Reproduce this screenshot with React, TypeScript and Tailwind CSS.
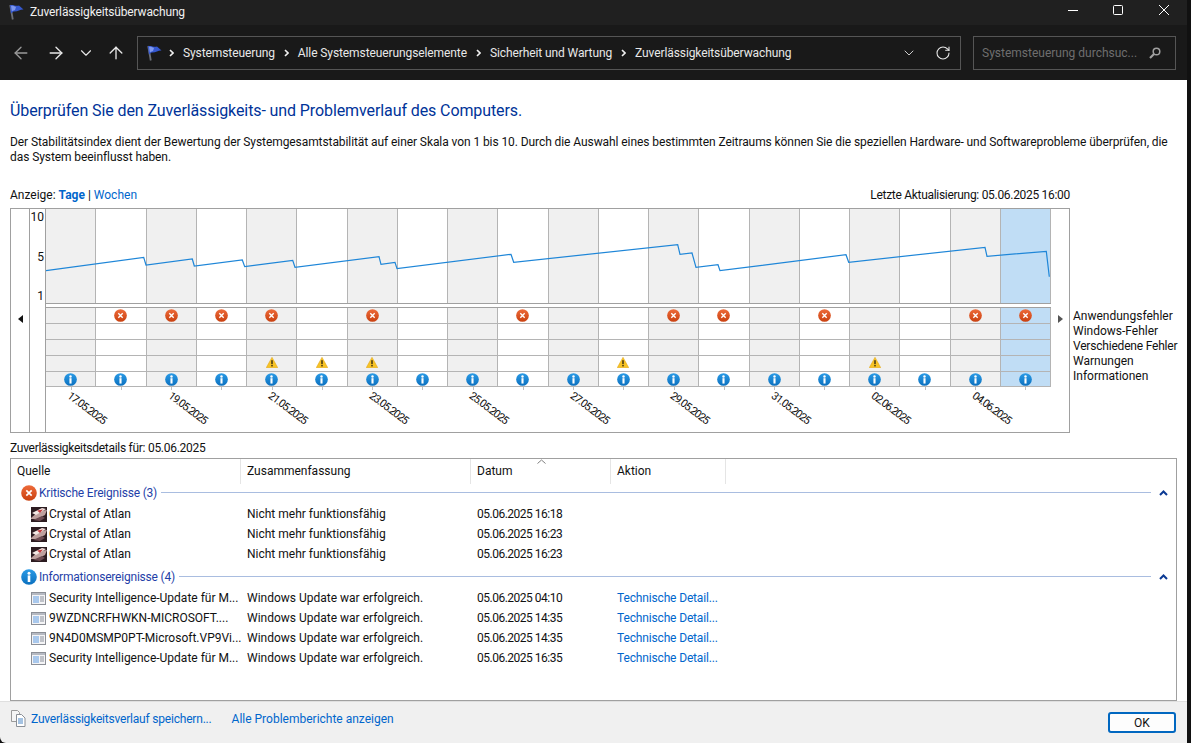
import { ArrowLeft, ArrowRight, ArrowUp, ChevronDown, RotateCw } from "lucide-react";

const errorDays = [1, 2, 3, 4, 6, 9, 12, 13, 15, 18, 19];
const warningDays = [4, 5, 6, 11, 16];
const dates = ["17.05.2025", "19.05.2025", "21.05.2025", "23.05.2025", "25.05.2025", "27.05.2025", "29.05.2025", "31.05.2025", "02.06.2025", "04.06.2025"];
const days = Array.from({ length: 20 }, (_, i) => i);
const linePoints =
  "45.5,270.7 143.7,257.3 146,265 192.3,259 194.3,266 242.3,260 244.7,266.7 292.7,260.3 295,267.3 379,256.7 381,264.3 395,262.3 397,268.7 511,254.3 513.7,262.3 677.7,244.7 680,254.3 692,253 696,267.3 718,264.7 720,270.7 846,254.7 848.7,262.3 985,247.3 987,256.3 1046.3,251.3 1049.3,276.7";

function Flag({ className }: { className?: string }) {
  return (
    <svg viewBox="0 0 16 16" className={className}>
      <path d="M2.200 1 4.800 15.500" stroke="#6b6f78" strokeWidth="1.800" fill="none" />
      <path d="M2 1.200C5 .3 8 2.500 11 1.500l4.500 4.100C12.500 5.200 9.500 8 5.500 7.500L3 9.500Z" fill="#3558d0" />
      <path d="M3 1.800c2-.3 3.500.5 5 1.200L7 6 3.800 7.200Z" fill="#7f98ee" />
    </svg>
  );
}

function ErrorIcon({ size = 13 }: { size?: number }) {
  return (
    <svg width={size} height={size} viewBox="0 0 16 16" className="shrink-0">
      <defs>
        <linearGradient id="err" x1="0" y1="0" x2="0" y2="1">
          <stop offset="0" stopColor="#ee6b3a" />
          <stop offset="1" stopColor="#c9400f" />
        </linearGradient>
      </defs>
      <circle cx="8" cy="8" r="7.800" fill="url(#err)" />
      <path d="M5.300 5.300 10.700 10.700M10.700 5.300 5.300 10.700" stroke="#fff" strokeWidth="1.700" />
    </svg>
  );
}

function InfoIcon({ size = 13 }: { size?: number }) {
  return (
    <svg width={size} height={size} viewBox="0 0 16 16" className="shrink-0">
      <defs>
        <linearGradient id="inf" x1="0" y1="0" x2="0" y2="1">
          <stop offset="0" stopColor="#2b9be6" />
          <stop offset="1" stopColor="#0b70bf" />
        </linearGradient>
      </defs>
      <circle cx="8" cy="8" r="7.800" fill="url(#inf)" />
      <rect x="6.700" y="6.400" width="2.600" height="6.600" fill="#fff" />
      <circle cx="8" cy="4.200" r="1.500" fill="#fff" />
    </svg>
  );
}

function WarningIcon() {
  return (
    <svg width="12" height="11" viewBox="0 0 12 11" className="shrink-0 -translate-y-[1px]">
      <path d="M6 .3 11.800 10.700H.2Z" fill="#f7c325" stroke="#e0a210" strokeWidth=".5" />
      <rect x="5.300" y="3.200" width="1.400" height="4" fill="#332a10" />
      <rect x="5.300" y="8" width="1.400" height="1.400" fill="#332a10" />
    </svg>
  );
}

function CrystalIcon() {
  return (
    <svg width="16" height="15" viewBox="0 0 16 15" className="shrink-0">
      <rect width="16" height="15" fill="#2c1b20" />
      <path d="M0 11 8 4l8-1-2 5-8 4H0Z" fill="#bfa09e" />
      <path d="M1 6 11 1l4 1L5 8Z" fill="#f3e6e2" />
      <path d="M6 3.500l6-1-3 3.500Z" fill="#c23a3e" />
      <path d="M2 13l9-4 3 2-5 3Z" fill="#6d4c52" />
    </svg>
  );
}

function UpdateIcon() {
  return (
    <svg width="15" height="13" viewBox="0 0 15 13" className="mr-[1px] shrink-0">
      <rect x=".5" y=".5" width="14" height="12" fill="#f4f4f6" stroke="#8c8f96" />
      <rect x="1" y="1" width="13" height="2" fill="#b5b9c2" />
      <rect x="2" y="4" width="6" height="7" fill="#a9c8ec" />
      <path d="M9 5h4M9 7h4M9 9h4" stroke="#8a8f9a" />
    </svg>
  );
}

function DocsIcon() {
  return (
    <svg width="15" height="17" viewBox="0 0 15 17" className="shrink-0">
      <path d="M.5.500h6l2 2v9h-8Z" fill="#f5f5f5" stroke="#9a9a9a" />
      <path d="M5.500 4.500h5l3.500 3.500v8.500H5.500Z" fill="#fff" stroke="#8a8f96" />
      <path d="M7 9h5M7 11h5M7 13h5" stroke="#4a86c5" />
    </svg>
  );
}

function cellBg(i: number) {
  if (i === 19) return "bg-[#c0ddf5]";
  return i % 2 === 0 ? "bg-[#f0f0f0]" : "bg-white";
}

function EventRow({ active, icon, short }: { active: number[]; icon: React.ReactNode; short?: boolean }) {
  return (
    <div className={`grid grid-cols-[repeat(20,minmax(0,1fr))] ${short ? "h-[15px]" : "h-[16px]"}`}>
      {days.map((i) => (
        <div key={i} className={`${cellBg(i)} flex items-center justify-center border-r border-b border-[#b4b4b4]`}>
          {active.includes(i) && icon}
        </div>
      ))}
    </div>
  );
}

function Crumb({ children }: { children: string }) {
  return (
    <span className="flex items-center">
      <svg width="5" height="8" viewBox="0 0 5 8" className="mr-[9px]">
        <path d="M1 1l3 3-3 3" stroke="#f0f0f0" strokeWidth="1.600" fill="none" />
      </svg>
      <span className="mr-[9px] tracking-[-0.1px]">{children}</span>
    </span>
  );
}

function Group({ title, icon }: { title: string; icon: React.ReactNode }) {
  return (
    <div className="flex h-[17px] items-center pl-[10px]">
      {icon}
      <span className="ml-[2px] tracking-[-0.2px] text-[#1f3fa8]">{title}</span>
      <div className="ml-[4px] h-px flex-1 bg-[#a9bde0]" />
      <svg width="9" height="6" viewBox="0 0 9 6" className="mr-[8px] ml-[8px]">
        <path d="M1 5l3.500-3.500L8 5" stroke="#0b3a94" strokeWidth="2" fill="none" />
      </svg>
    </div>
  );
}

function Row({ icon, name, summary, date, action }: { icon: React.ReactNode; name: string; summary: string; date: string; action?: boolean }) {
  return (
    <div className="grid h-[20px] grid-cols-[230px_230px_140px_1fr] items-center text-[#111]">
      <div className="flex items-center gap-[2px] pl-[20px] whitespace-nowrap">
        {icon}
        <span>{name}</span>
      </div>
      <div className="pl-[6px]">{summary}</div>
      <div className="pl-[6px] tracking-[-0.5px]">{date}</div>
      <div className="pl-[6px] tracking-[-0.15px] text-[#0066cc]">{action && "Technische Detail..."}</div>
    </div>
  );
}

export default function App() {
  return (
    <div className="h-[743px] w-[1191px] overflow-hidden bg-[#111] font-['Roboto',sans-serif] text-[12px] leading-[16px]">
      <div className="flex h-[743px] w-[1187px] flex-col overflow-hidden rounded-bl-[6px]">
        <div className="flex h-[25px] items-center bg-[#202020] pl-[8px] text-[#f0f0f0]">
          <Flag className="h-[16px] w-[16px] -translate-y-[1px]" />
          <span className="ml-[6px] -translate-y-[1px] tracking-[-0.15px]">Zuverlässigkeitsüberwachung</span>
          <div className="ml-auto flex -translate-y-[3px] items-center pr-[18px] text-white">
            <svg width="10" height="10" viewBox="0 0 10 10" className="mr-[35px]">
              <path d="M0 5.500h10" stroke="currentColor" />
            </svg>
            <svg width="10" height="10" viewBox="0 0 10 10" className="mr-[36px]">
              <rect x=".5" y=".5" width="9" height="9" rx="1" fill="none" stroke="currentColor" />
            </svg>
            <svg width="10" height="10" viewBox="0 0 10 10">
              <path d="M0 0l10 10M10 0 0 10" stroke="currentColor" />
            </svg>
          </div>
        </div>

        <div className="flex h-[55px] items-center bg-[#191919] text-[#e8e8e8]">
          <ArrowLeft size={20} strokeWidth={1.6} className="ml-[11px] text-[#9a9a9a]" />
          <ArrowRight size={20} strokeWidth={1.6} className="ml-[15px]" />
          <ChevronDown size={18} strokeWidth={1.5} className="mr-[1px] ml-[11px]" />
          <ArrowUp size={20} strokeWidth={1.6} className="ml-[10px]" />
          <div className="ml-[11px] flex h-[34px] w-[824px] items-center border border-[#555] pl-[8px]">
            <Flag className="mr-[7px] h-[16px] w-[16px]" />
            <Crumb>Systemsteuerung</Crumb>
            <Crumb>Alle Systemsteuerungselemente</Crumb>
            <Crumb>Sicherheit und Wartung</Crumb>
            <Crumb>Zuverlässigkeitsüberwachung</Crumb>
            <ChevronDown size={16} strokeWidth={1.3} className="mr-[18px] ml-auto" />
            <RotateCw size={16} strokeWidth={1.6} className="mr-[9px]" />
          </div>
          <div className="ml-[12px] flex h-[34px] w-[203px] items-center border border-[#555] pr-[14px] pl-[8px] text-[#6e6e6e]">
            <span>Systemsteuerung durchsuc...</span>
            <svg width="12" height="12" viewBox="0 0 12 12" className="ml-auto text-[#a0a0a0]">
              <circle cx="7.500" cy="4.500" r="3.300" fill="none" stroke="currentColor" strokeWidth="1.500" />
              <path d="M5 7 1 11" stroke="currentColor" strokeWidth="2.200" />
            </svg>
          </div>
        </div>

        <div className="flex flex-1 flex-col bg-white pl-[10px] text-[#111]">
          <div className="mt-[21px] h-[20px] text-[16px] leading-[20px] tracking-[-0.1px] text-[#003399]">
            Überprüfen Sie den Zuverlässigkeits- und Problemverlauf des Computers.
          </div>
          <p className="mt-[14px] w-[1165px] leading-[15px] tracking-[-0.08px]">
            Der Stabilitätsindex dient der Bewertung der Systemgesamtstabilität auf einer Skala von 1 bis 10. Durch die Auswahl eines bestimmten Zeitraums können Sie die speziellen Hardware- und Softwareprobleme überprüfen, die das System beeinflusst haben.
          </p>
          <div className="mt-[22px] flex h-[16px] w-[1060px] justify-between">
            <span>
              Anzeige: <span className="font-bold text-[#0066cc]">Tage</span> | <span className="text-[#0066cc]">Wochen</span>
            </span>
            <span className="tracking-[-0.3px]">Letzte Aktualisierung: 05.06.2025 16:00</span>
          </div>

          <div className="mt-[5px] flex">
            <div className="flex h-[225px] w-[1060px] border border-[#a0a0a0]">
              <div className="flex w-[19px] items-start justify-center border-r border-[#a0a0a0] pt-[106px]">
                <svg width="5" height="8" viewBox="0 0 5 8">
                  <path d="M5 0v8L0 4Z" fill="#111" />
                </svg>
              </div>
              <div className="flex w-[16px] flex-col items-end border-r border-[#a0a0a0] pr-[1px] text-[#111]">
                <span>10</span>
                <span className="mt-[24px]">5</span>
                <span className="mt-[23px]">1</span>
              </div>
              <div className="relative w-[1005px]">
                <div className="grid h-[95px] grid-cols-[repeat(20,minmax(0,1fr))] border-b border-[#a0a0a0]">
                  {days.map((i) => (
                    <div key={i} className={`${cellBg(i)} border-r border-[#b4b4b4]`} />
                  ))}
                </div>
                <svg viewBox="46 209 1005 94" className="absolute top-0 left-0 h-[94px] w-[1005px]">
                  <polyline points={linePoints} fill="none" stroke="#1e86d8" strokeWidth="1.200" />
                </svg>
                <div className="h-[4px] border-b border-[#a0a0a0]" />
                <EventRow active={errorDays} icon={<ErrorIcon />} />
                <EventRow active={[]} icon={null} />
                <EventRow active={[]} icon={null} />
                <EventRow active={warningDays} icon={<WarningIcon />} />
                <EventRow active={days} icon={<InfoIcon />} short />
                <div className="grid h-[45px] grid-cols-[repeat(20,minmax(0,1fr))]">
                  {days.map((i) => (
                    <div key={i} className="flex justify-center">
                      <div className="h-[3px] w-px bg-[#c0c0c0]" />
                    </div>
                  ))}
                </div>
                <div className="absolute top-[178px] left-0 grid h-[44px] w-[1005px] grid-cols-[repeat(10,minmax(0,1fr))]">
                  {dates.map((d) => (
                    <div key={d} className="relative">
                      <span className="absolute top-[3px] left-[26px] origin-top-left rotate-[37deg] text-[11px] leading-[12px] tracking-[-1px] whitespace-nowrap">
                        {d}
                      </span>
                    </div>
                  ))}
                </div>
              </div>
              <div className="flex w-[18px] items-start justify-center pt-[106px]">
                <svg width="5" height="8" viewBox="0 0 5 8">
                  <path d="M0 0v8l5-4Z" fill="#555" />
                </svg>
              </div>
            </div>
            <div className="mt-[101px] ml-[3px] flex flex-col leading-[15px] whitespace-nowrap">
              <span>Anwendungsfehler</span>
              <span>Windows-Fehler</span>
              <span className="tracking-[-0.2px]">Verschiedene Fehler</span>
              <span>Warnungen</span>
              <span>Informationen</span>
            </div>
          </div>

          <div className="mt-[7px] h-[16px] tracking-[-0.28px]">Zuverlässigkeitsdetails für: 05.06.2025</div>
          <div className="mt-[2px] h-[243px] w-[1167px] border border-[#a0a0a0] bg-white">
            <div className="grid h-[25px] grid-cols-[230px_230px_140px_115px]">
              <div className="border-r border-[#e5e5e5] pt-[4px] pl-[6px]">Quelle</div>
              <div className="border-r border-[#e5e5e5] pt-[4px] pl-[6px]">Zusammenfassung</div>
              <div className="relative border-r border-[#e5e5e5] pt-[4px] pl-[6px]">
                Datum
                <svg width="9" height="5" viewBox="0 0 9 5" className="absolute top-0 left-[66px]">
                  <path d="M.5 4.500l4-3.500 4 3.500" stroke="#808080" fill="none" />
                </svg>
              </div>
              <div className="border-r border-[#e5e5e5] pt-[4px] pl-[6px]">Aktion</div>
            </div>
            <Group title="Kritische Ereignisse (3)" icon={<ErrorIcon size={16} />} />
            <div className="mt-[3px]">
              <Row icon={<CrystalIcon />} name="Crystal of Atlan" summary="Nicht mehr funktionsfähig" date="05.06.2025 16:18" />
              <Row icon={<CrystalIcon />} name="Crystal of Atlan" summary="Nicht mehr funktionsfähig" date="05.06.2025 16:23" />
              <Row icon={<CrystalIcon />} name="Crystal of Atlan" summary="Nicht mehr funktionsfähig" date="05.06.2025 16:23" />
            </div>
            <div className="mt-[4px]">
              <Group title="Informationsereignisse (4)" icon={<InfoIcon size={16} />} />
            </div>
            <div className="mt-[3px]">
              <Row icon={<UpdateIcon />} name="Security Intelligence-Update für M..." summary="Windows Update war erfolgreich." date="05.06.2025 04:10" action />
              <Row icon={<UpdateIcon />} name="9WZDNCRFHWKN-MICROSOFT...." summary="Windows Update war erfolgreich." date="05.06.2025 14:35" action />
              <Row icon={<UpdateIcon />} name="9N4D0MSMP0PT-Microsoft.VP9Vi..." summary="Windows Update war erfolgreich." date="05.06.2025 14:35" action />
              <Row icon={<UpdateIcon />} name="Security Intelligence-Update für M..." summary="Windows Update war erfolgreich." date="05.06.2025 16:35" action />
            </div>
          </div>
        </div>

        <div className="flex h-[42px] items-start justify-between border-t border-[#dfdfdf] bg-[#f0f0f0] pl-[11px] text-[#0066cc]">
          <div className="mt-[8px] flex items-center">
            <DocsIcon />
            <span className="ml-[5px] tracking-[-0.2px]">Zuverlässigkeitsverlauf speichern...</span>
            <span className="ml-[20px]">Alle Problemberichte anzeigen</span>
          </div>
          <button className="mt-[10px] mr-[11px] h-[21px] w-[68px] rounded-[3px] border-2 border-[#0067c0] bg-[#fdfdfd] text-[#111]">
            OK
          </button>
        </div>
      </div>
    </div>
  );
}
